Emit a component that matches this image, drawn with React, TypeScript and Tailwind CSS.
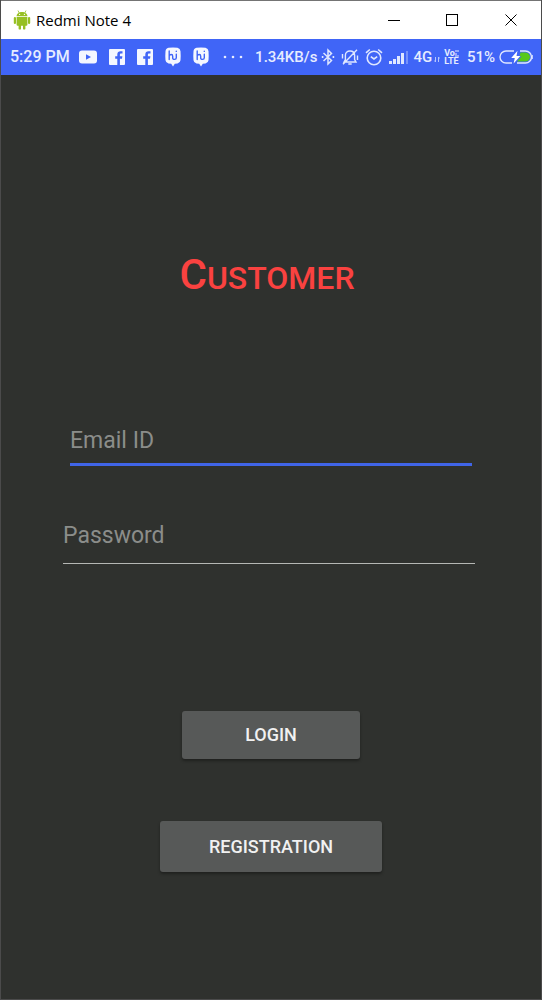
import React from "react";

function AndroidIcon() {
  return (
    <svg width="18" height="20" viewBox="0 0 18 20" fill="#97c024" aria-hidden="true">
      <path d="M5 .5 6.200 3M13 .5 11.800 3" stroke="#97c024" strokeWidth="0.800" />
      <path d="M3.600 6.200C3.600 3.800 6 2 9 2s5.400 1.800 5.400 4.200z" />
      <path d="M3.600 7h10.800v7.800a1 1 0 0 1-1 1H4.600a1 1 0 0 1-1-1z" />
      <rect x="0.800" y="7" width="2.200" height="7" rx="1.100" />
      <rect x="15" y="7" width="2.200" height="7" rx="1.100" />
      <rect x="5.600" y="14" width="2.400" height="5.600" rx="1.200" />
      <rect x="10" y="14" width="2.400" height="5.600" rx="1.200" />
      <circle cx="6.600" cy="4.400" r="0.600" fill="#fff" />
      <circle cx="11.400" cy="4.400" r="0.600" fill="#fff" />
    </svg>
  );
}

function YoutubeIcon() {
  return (
    <svg width="18" height="14" viewBox="0 0 18 14" aria-hidden="true">
      <rect y="0.500" width="18" height="13" rx="3" fill="#f4f7ff" />
      <path d="M7 4.200v5.600L12 7z" fill="#4065f7" />
    </svg>
  );
}

function FacebookIcon() {
  return (
    <svg width="16" height="16" viewBox="0 0 16 16" aria-hidden="true">
      <rect width="16" height="16" rx="1" fill="#f4f7ff" />
      <path d="M8.300 16V9.800H6.200V7.300h2.100V5.500C8.300 3.400 9.600 2.300 11.500 2.300h2v2.300h-1.300c-1 0-1.300.5-1.300 1.200v1.500h2.500l-.4 2.500h-2.100V16z" fill="#4065f7" />
    </svg>
  );
}

function HikeIcon() {
  return (
    <svg width="16" height="20" viewBox="0 0 16 20" aria-hidden="true">
      <path d="M3.500.8Q8 0 12.500.8q2.800.6 3 3.500.4 4.500 0 9-.2 2.600-3 3.100l-2.700.4L8 19.500 6.200 16.800l-2.700-.4q-2.800-.5-3-3.100-.4-4.500 0-9Q.7 1.400 3.500.8z" fill="#f4f7ff" />
      <g fill="none" stroke="#4065f7" strokeWidth="1.400" strokeLinecap="round">
        <path d="M4.200 4v8.500M4.200 9c.6-1.900 3.500-2 3.500.2v2.100c0 1.600 3.600 1.500 3.600-.6V7.200" />
        <path d="M11.300 4.300v.1" />
      </g>
    </svg>
  );
}

function BluetoothIcon() {
  return (
    <svg width="14" height="18" viewBox="0 0 14 18" fill="none" stroke="#dfe7ff" strokeWidth="1.500" aria-hidden="true">
      <path d="m2.500 5 8 7.500L7 16V2l3.500 3.500-8 7.500" />
      <path d="M.8 9h1.600M11.600 9h1.600" strokeWidth="2" />
    </svg>
  );
}

function MutedBellIcon() {
  return (
    <svg width="18" height="18" viewBox="0 0 18 18" fill="none" stroke="#dfe7ff" strokeWidth="1.400" aria-hidden="true">
      <path d="M3 14h12l-1.400-2.500V7.200C13.600 4.800 11.800 3 9 3S4.400 4.800 4.400 7.200v4.300zM7.300 16h3.400M16 1.800 2 16.200M1.500 6v4.500M16.500 7.500V12" />
    </svg>
  );
}

function AlarmIcon() {
  return (
    <svg width="18" height="18" viewBox="0 0 18 18" fill="none" stroke="#dfe7ff" strokeWidth="1.600" aria-hidden="true">
      <circle cx="9" cy="10" r="6.800" />
      <path d="M1 4.800 4.800 1.500M17 4.800l-3.800-3.300M5.800 8.600 9 11l3.200-2.400" />
    </svg>
  );
}

function SignalIcon() {
  return (
    <svg width="20" height="14" viewBox="0 0 20 14" fill="#dfe7ff" aria-hidden="true">
      <rect x="0" y="11" width="3" height="3" />
      <rect x="4" y="9" width="3" height="5" />
      <rect x="8" y="6" width="3" height="8" />
      <rect x="12" y="3" width="3" height="11" />
      <rect x="17" y="1" width="2" height="13" opacity="0.350" />
    </svg>
  );
}

function BatteryIcon() {
  return (
    <svg width="34" height="14" viewBox="0 0 34 14" aria-hidden="true">
      <path d="M21.500 2.500h5a4.500 4.500 0 0 1 0 9H18l4.500-5h-2z" fill="#58c91c" />
      <path d="M15 1H7a6 6 0 0 0 0 12h6M21 1h5.500a6 6 0 0 1 0 12H18" fill="none" stroke="#dfe7ff" strokeWidth="1.400" />
      <path d="M18.500.8 12.200 8h3.600l-1.200 5.500L21.300 6h-3.800z" fill="#fff" />
      <path d="M33.200 5v4" stroke="#dfe7ff" strokeWidth="1.200" />
    </svg>
  );
}

function TitleBar() {
  return (
    <header className="flex h-[39px] items-center border-t border-[#747474] bg-white pl-3 text-black">
      <AndroidIcon />
      <span className="ml-[5px] flex-1 font-['Open_Sans','Noto_Sans',sans-serif] text-[15px] leading-5">Redmi Note 4</span>
      <button type="button" aria-label="Minimize" className="flex h-full w-[58px] items-center justify-center">
        <svg width="12" height="12" stroke="currentColor" aria-hidden="true"><path d="M0 6.500h12" /></svg>
      </button>
      <button type="button" aria-label="Maximize" className="flex h-full w-[58px] items-center justify-center">
        <svg width="12" height="12" fill="none" stroke="currentColor" aria-hidden="true"><rect x="0.500" y="0.500" width="11" height="11" /></svg>
      </button>
      <button type="button" aria-label="Close" className="flex h-full w-[60px] items-center justify-center">
        <svg width="12" height="12" stroke="currentColor" aria-hidden="true"><path d="m.5.5 11 11m0-11-11 11" /></svg>
      </button>
    </header>
  );
}

function StatusBar() {
  return (
    <div className="flex h-9 items-center justify-between bg-[#4065f7] pr-2 pl-[9px] text-base leading-5 font-medium whitespace-nowrap text-[#e6ecff]">
      <div className="flex items-center gap-3">
        <span className="w-[57px]">5:29 PM</span>
        <YoutubeIcon />
        <div className="flex items-center gap-3 pr-0.5">
          <FacebookIcon />
          <FacebookIcon />
          <HikeIcon />
          <HikeIcon />
        </div>
        <svg width="20" height="4" viewBox="0 0 20 4" fill="#e6ecff" aria-hidden="true">
          <circle cx="2" cy="2" r="1.300" />
          <circle cx="10" cy="2" r="1.300" />
          <circle cx="18" cy="2" r="1.300" />
        </svg>
      </div>
      <div className="flex items-center gap-1 text-[15px]">
        <span>1.34KB/s</span>
        <div className="flex items-center gap-[6px]">
          <BluetoothIcon />
          <MutedBellIcon />
          <AlarmIcon />
          <SignalIcon />
        </div>
        <span className="flex items-end">
          4G
          <svg width="6" height="8" viewBox="0 0 6 8" fill="none" stroke="#b5c6ff" className="mb-1 ml-0.5" aria-hidden="true">
            <path d="M1.500 2v5M.3 5.500 1.500 7M4.500 7V2M5.700 3.500 4.500 2" />
          </svg>
        </span>
        <span className="mr-1 flex flex-col text-[9px] leading-[8px] font-bold">
          <span className="flex items-center">
            Vo
            <svg width="4" height="7" viewBox="0 0 4 7" fill="none" stroke="#e6ecff" aria-hidden="true">
              <path d="M1 0v2M1 3v4M3 0v2M3 5v2" />
            </svg>
          </span>
          <span>LTE</span>
        </span>
        <span>51%</span>
        <BatteryIcon />
      </div>
    </div>
  );
}

export default function App() {
  return (
    <div className="flex min-h-screen flex-col border-r border-b border-l border-[#4b4b4b] bg-[#2f312e] font-[Roboto,sans-serif]">
      <TitleBar />
      <StatusBar />
      <main className="flex flex-1 flex-col px-[62px] pt-[176px]">
        <h1 className="mr-2 text-center text-[32px] leading-[48px] font-medium text-[#fa4240] uppercase">
          <span className="text-[42px]">C</span>ustomer
        </h1>
        <form className="flex flex-col" onSubmit={(event) => event.preventDefault()}>
          <input
            type="email"
            aria-label="Email ID"
            placeholder="Email ID"
            className="mx-[7px] mt-[116px] h-12 border-b-[3px] border-[#4065e8] bg-transparent text-[23px] text-white outline-none placeholder:text-[#8b8d8a]"
          />
          <input
            type="password"
            aria-label="Password"
            placeholder="Password"
            className="mt-[42px] mr-1 h-14 border-b border-[#b5b7b4] bg-transparent text-[23px] text-white outline-none placeholder:text-[#8b8d8a]"
          />
          <button
            type="submit"
            className="mt-[147px] h-12 w-[178px] self-center rounded-[3px] bg-[#575958] text-lg font-medium text-[#f1f1f1] shadow-[0_2px_3px_rgba(0,0,0,0.35)]"
          >
            LOGIN
          </button>
          <button
            type="button"
            className="mt-[62px] mb-10 h-[51px] w-[222px] self-center rounded-[3px] bg-[#575958] text-lg font-medium text-[#f1f1f1] shadow-[0_2px_3px_rgba(0,0,0,0.35)]"
          >
            REGISTRATION
          </button>
        </form>
      </main>
    </div>
  );
}
